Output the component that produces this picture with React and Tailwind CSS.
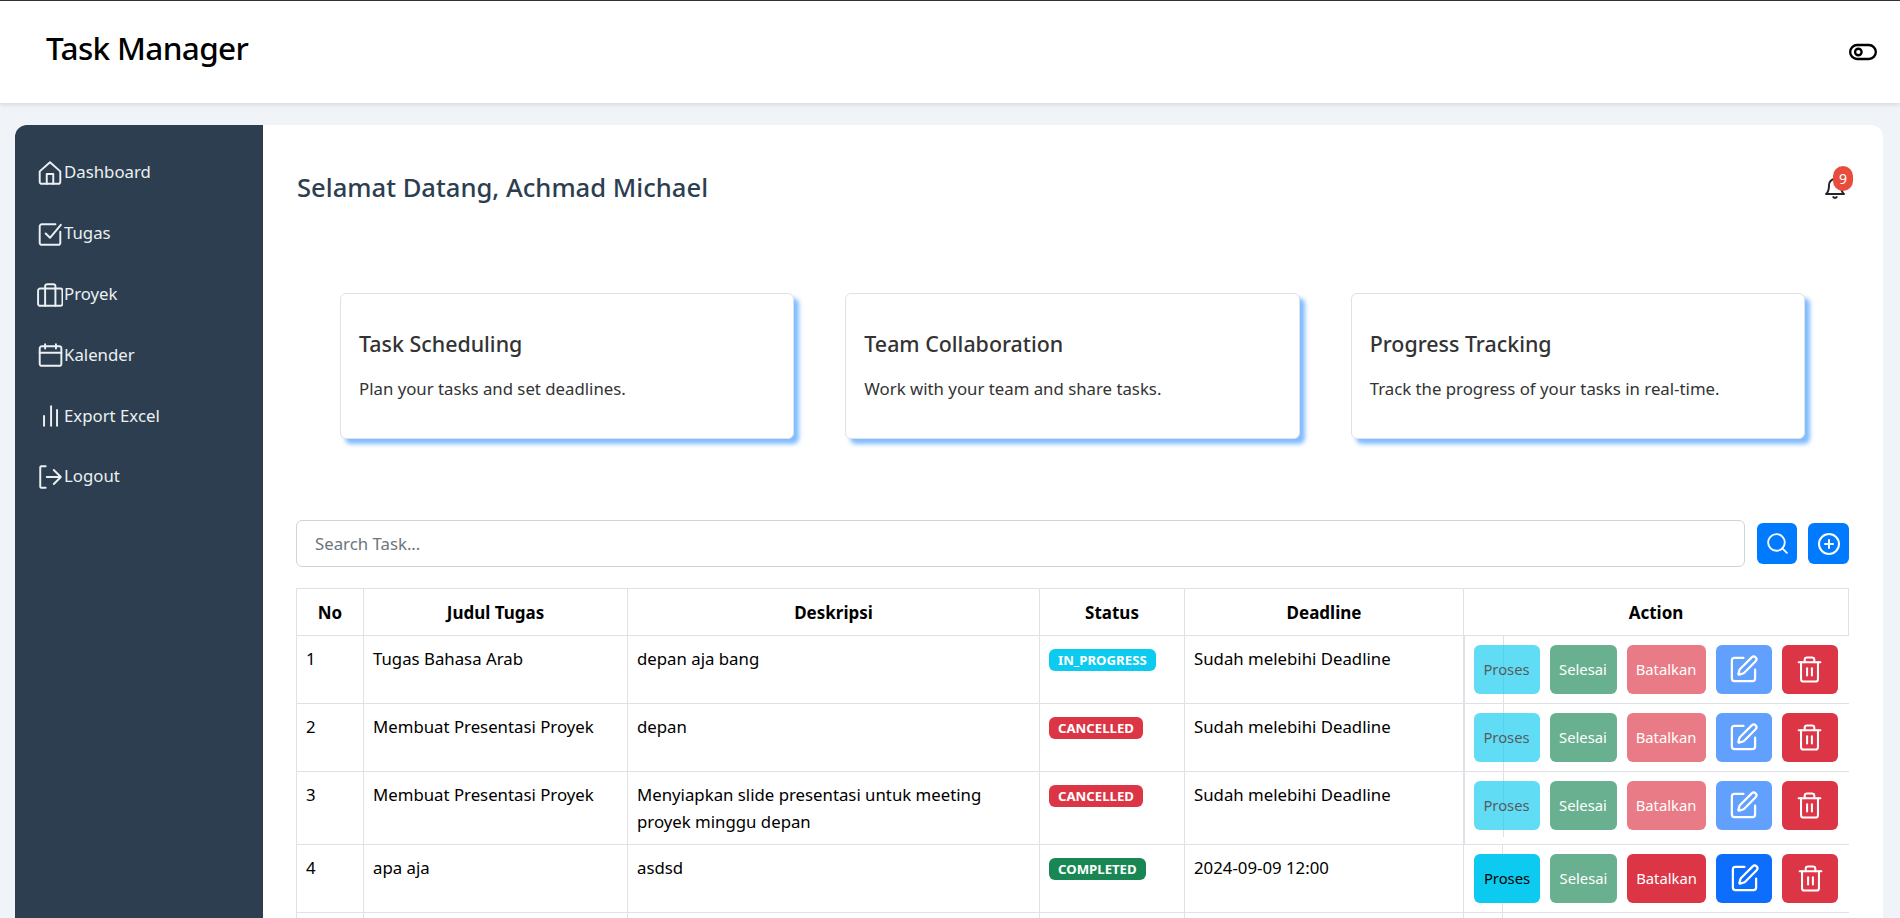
import React from "react";
import { SquarePen, Trash2, Search, CirclePlus } from "lucide-react";

const Ico = ({ children }) => (
  <svg width="26" height="26" viewBox="0 0 24 24" fill="none" stroke="currentColor" strokeWidth="1.8" strokeLinecap="round" strokeLinejoin="round">
    {children}
  </svg>
);

const nav = [
  ["Dashboard", <><path d="M2.5 10.5 12 2l9.5 8.5V20a2 2 0 0 1-2 2h-15a2 2 0 0 1-2-2z" /><path d="M9 22v-9h6v9" /></>],
  ["Tugas", <><path d="M21.5 10v10a2 2 0 0 1-2 2h-15a2 2 0 0 1-2-2V5a2 2 0 0 1 2-2H17" /><path d="m8 11.5 4 4L22 3.5" /></>],
  ["Proyek", <><rect x="1" y="6" width="22.5" height="16" rx="2" /><path d="M7.5 22V4a2 2 0 0 1 2-2h5.5a2 2 0 0 1 2 2v18" /></>],
  ["Kalender", <><rect x="2.5" y="4" width="20" height="18" rx="2" /><path d="M7.5 2v4M17.5 2v4M2.5 10h20" /></>],
  ["Export Excel", <><path d="M6.5 21v-9M13 21V3M18.5 21V6.5" /></>],
  ["Logout", <><path d="M8 2H4a1 1 0 0 0-1 1v18a1 1 0 0 0 1 1h4" /><path d="M9 12h13M15.5 5.5 22 12l-6.5 6.5" /></>],
];

const cards = [
  ["Task Scheduling", "Plan your tasks and set deadlines."],
  ["Team Collaboration", "Work with your team and share tasks."],
  ["Progress Tracking", "Track the progress of your tasks in real-time."],
];

const rows = [
  { no: 1, t: "Tugas Bahasa Arab", d: "depan aja bang", s: "IN_PROGRESS", sc: "bg-[#0dcaf0]", dl: "Sudah melebihi Deadline", active: false, h: "h-[68px]", gap: false },
  { no: 2, t: "Membuat Presentasi Proyek", d: "depan", s: "CANCELLED", sc: "bg-[#dc3545]", dl: "Sudah melebihi Deadline", active: false, h: "h-[68px]", gap: false },
  { no: 3, t: "Membuat Presentasi Proyek", d: "Menyiapkan slide presentasi untuk meeting proyek minggu depan", s: "CANCELLED", sc: "bg-[#dc3545]", dl: "Sudah melebihi Deadline", active: false, h: "h-[73px]", gap: true },
  { no: 4, t: "apa aja", d: "asdsd", s: "COMPLETED", sc: "bg-[#198754]", dl: "2024-09-09 12:00", active: true, h: "h-[68px]", gap: false },
  { no: "", t: "", d: "", s: null, dl: "", active: true, h: "h-[67px]", gap: false },
];

const Btn = ({ className, children }) => (
  <button className={`relative h-[49px] rounded-md flex items-center justify-center text-[14.8px] leading-normal ${className}`}>{children}</button>
);

export default function App() {
  return (
    <div className="h-[918px] overflow-hidden bg-[#f0f4f8] text-black [font-family:'Noto_Sans','Open_Sans',sans-serif]">
      <div className="h-px bg-[#333333]" />
      <header className="h-[102px] bg-white shadow-[0_2px_4px_rgba(0,0,0,0.1)] flex items-center justify-between pl-[46px] pr-[23px] relative">
        <h1 className="text-[31.5px] font-medium leading-none -mt-[8px] tracking-[-0.65px]">Task Manager</h1>
        <svg width="28" height="28" viewBox="0 0 24 24" fill="none" stroke="currentColor" strokeWidth="2" strokeLinecap="round" strokeLinejoin="round">
          <rect x="1" y="6" width="22" height="12" rx="6" />
          <circle cx="8" cy="12" r="2.8" />
        </svg>
      </header>
      <div className="flex pl-[15px] pr-[17px] pt-[22px]">
        <aside className="w-[248px] shrink-0 h-[900px] bg-[#2c3e50] rounded-tl-xl pl-[22px] pt-[35px] text-[#ecf0f1]">
          <ul className="flex flex-col gap-[34.8px]">
            {nav.map(([label, icon]) => (
              <li key={label} className="flex items-center h-[26px] text-[16.8px]">
                <Ico>{icon}</Ico>
                <span className="-mt-[2px] ml-px">{label}</span>
              </li>
            ))}
          </ul>
        </aside>
        <main className="flex-1 bg-white rounded-tr-xl pl-[33px] pr-[34px] min-w-0">
          <div className="flex items-start justify-between pt-[46px] h-[168px]">
            <h2 className="text-[25.6px] font-medium text-[#2c3e50] leading-[36px] -mt-[1px] ml-px">Selamat Datang, Achmad Michael</h2>
            <div className="relative mt-[5px] mr-[2px] text-[#212529]">
              <svg width="24" height="24" viewBox="0 0 24 24" fill="none" stroke="currentColor" strokeWidth="2" strokeLinecap="round" strokeLinejoin="round">
                <path d="M18 9A6 6 0 0 0 6 9c0 7-3 9-3 9h18s-3-2-3-9" />
                <path d="M13.7 21a2 2 0 0 1-3.4 0" />
              </svg>
              <span className="absolute -top-[10px] left-[10px] w-5 h-[25px] rounded-full bg-[#e74c3c] text-white text-[14px] flex items-center justify-center">9</span>
            </div>
          </div>
          <div className="grid grid-cols-3 gap-[51px] pl-[44px] pr-[44px] h-[227px]">
            {cards.map(([t, d]) => (
              <div key={t} className="h-[146px] border border-[#dee2e6] rounded-md bg-white shadow-[5px_5px_4px_rgba(0,123,255,0.5)] px-[18px] pt-[38px]">
                <h5 className="text-[21.4px] font-medium text-[#333333] leading-[24px]">{t}</h5>
                <p className="mt-[21px] text-[16.8px] text-[#333333] leading-[24px]">{d}</p>
              </div>
            ))}
          </div>
          <div className="flex items-center gap-3">
            <div className="flex-1 h-[47px] border border-[#ced4da] rounded-md px-[18px] flex items-center text-[#6c757d] text-[16.8px]">Search Task...</div>
            <div className="flex gap-[11px]">
              <button className="w-10 h-[41px] rounded-md bg-[#007bff] text-white flex items-center justify-center"><Search size={25} strokeWidth={1.8} /></button>
              <button className="w-[41px] h-[41px] rounded-md bg-[#007bff] text-white flex items-center justify-center"><CirclePlus size={24} strokeWidth={2} /></button>
            </div>
          </div>
          <table className="mt-[21px] w-[1553px] table-fixed border-collapse text-[16.8px] leading-[27px]">
            <thead>
              <tr className="h-[47px] text-center font-bold text-[17px]">
                <th className="w-[67px] border border-[#dee2e6]">No</th>
                <th className="w-[264px] border border-[#dee2e6]">Judul Tugas</th>
                <th className="w-[412px] border border-[#dee2e6]">Deskripsi</th>
                <th className="w-[145px] border border-[#dee2e6]">Status</th>
                <th className="w-[279px] border border-[#dee2e6]">Deadline</th>
                <th className="border border-[#dee2e6]">Action</th>
              </tr>
            </thead>
            <tbody>
              {rows.map((r, i) => (
                <tr key={i} className={r.h}>
                  <td className="align-top border border-[#dee2e6] px-[9px] pt-[9px]">{r.no}</td>
                  <td className="align-top border border-[#dee2e6] px-[9px] pt-[9px]">{r.t}</td>
                  <td className="align-top border border-[#dee2e6] px-[9px] pt-[9px]">{r.d}</td>
                  <td className="align-top border border-[#dee2e6] px-[9px] pt-[13px]">
                    {r.s && <span className={`inline-block h-[22px] align-top rounded-md px-[9px] text-[13.2px] font-bold text-white leading-[22px] ${r.sc}`}>{r.s}</span>}
                  </td>
                  <td className="align-top border border-[#dee2e6] px-[9px] pt-[9px]">{r.dl}</td>
                  <td className={`align-top relative border-y border-[#dee2e6] border-r-0 pt-[9px] ${r.active ? "border-l pl-[10px]" : "border-l-2 pl-[9px]"}`}>
                    <span className={`absolute left-[38px] top-0 w-px bg-[#dee2e6] ${r.gap ? "bottom-[7px]" : "bottom-0"}`} />
                    {r.s && (
                      <div className="relative flex gap-[10px]">
                        <Btn className={`w-[66px] bg-[#0dcaf0] text-black ${r.active ? "" : "opacity-65"}`}>Proses</Btn>
                        <Btn className="w-[67px] bg-[#198754] text-white opacity-65">Selesai</Btn>
                        <Btn className={`w-[79px] bg-[#dc3545] text-white ${r.active ? "" : "opacity-65"}`}>Batalkan</Btn>
                        <Btn className={`w-[56px] bg-[#0d6efd] text-white ${r.active ? "" : "opacity-65"}`}><SquarePen size={31} strokeWidth={1.7} /></Btn>
                        <Btn className="w-[56px] bg-[#dc3545] text-white"><Trash2 size={29} strokeWidth={1.7} /></Btn>
                      </div>
                    )}
                  </td>
                </tr>
              ))}
            </tbody>
          </table>
        </main>
      </div>
    </div>
  );
}
